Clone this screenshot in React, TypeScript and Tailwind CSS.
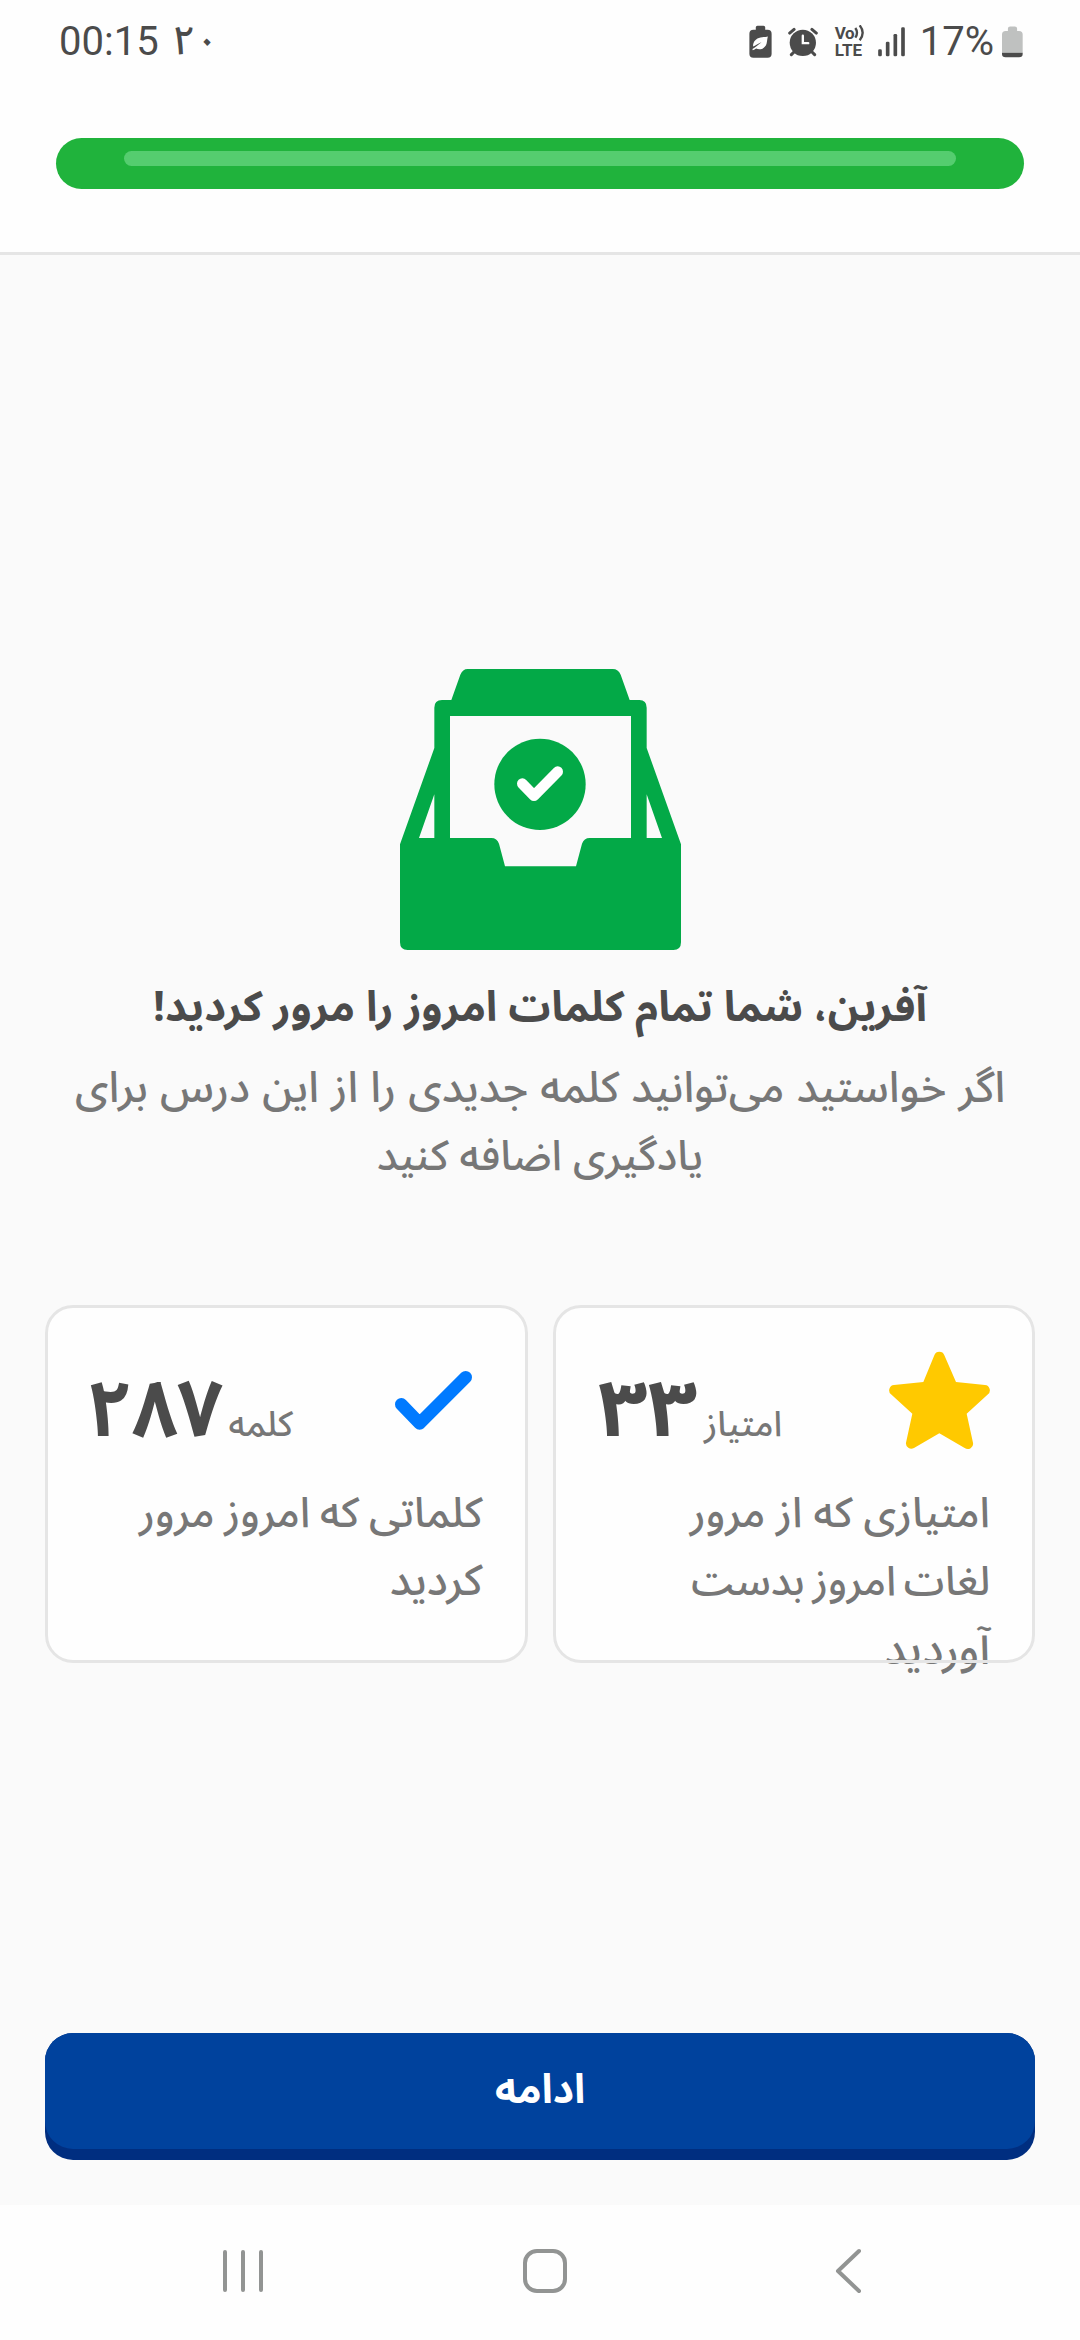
import type { ReactNode } from "react";

type Stat = {
	id: string;
	value: string;
	valueClass: string;
	unit: string;
	lines: { text: string; className: string }[];
	icon: ReactNode;
};

function StarIcon() {
	return (
		<svg viewBox="1047 180 303 303" className="size-[101px] shrink-0" fill="#ffc900">
			<path d="M1183 196A16 16 0 0 1 1213 196L1248 276L1335 285A16 16 0 0 1 1344 313L1280 371L1299 458A16 16 0 0 1 1274 474L1198 430L1122 474A16 16 0 0 1 1098 458L1117 371L1053 313A16 16 0 0 1 1062 285L1150 276Z" />
		</svg>
	);
}

function CheckIcon() {
	return (
		<svg viewBox="1053 180 303 303" className="size-[101px] shrink-0" fill="none">
			<path
				d="M1111 343L1166 400L1304 262"
				stroke="#007aff"
				strokeWidth="38"
				strokeLinecap="round"
				strokeLinejoin="round"
			/>
		</svg>
	);
}

function TrayIcon() {
	return (
		<svg viewBox="60 56 843 843" className="size-[281px] shrink-0">
			<path
				fill="#03a947"
				fillRule="evenodd"
				d="M263 56H698Q715 56 722 73L749 149H778Q800 149 800 172V293L903 582V876Q903 899 880 899H83Q60 899 60 876V582L163 293V172Q163 149 186 149H214L241 73Q248 56 263 56ZM210 197V563H334Q351 563 357 580L375 648H588L606 580Q612 563 629 563H753V197ZM163 432L117 563H163ZM800 432V563H846Z"
			/>
			<circle cx="480" cy="402" r="137" fill="#03a947" />
			<path
				d="M427 400L462 436L533 364"
				fill="none"
				stroke="#fff"
				strokeWidth="32"
				strokeLinecap="round"
				strokeLinejoin="round"
			/>
		</svg>
	);
}

const STATS: Stat[] = [
	{
		id: "words",
		value: "۲۸۷",
		valueClass: "-ml-[3px]",
		unit: "کلمه",
		lines: [
			{ text: "کلماتی که امروز مرور", className: "text-[42px] [word-spacing:-1px]" },
			{ text: "کردید", className: "text-[43px]" },
		],
		icon: <CheckIcon />,
	},
	{
		id: "points",
		value: "۳۳",
		valueClass: "mr-[10px] origin-left scale-x-110",
		unit: "امتیاز",
		lines: [
			{ text: "امتیازی که از مرور", className: "text-[42px]" },
			{ text: "لغات امروز بدست", className: "text-[41px] [word-spacing:-3px]" },
			{ text: "آوردید", className: "text-[44px]" },
		],
		icon: <StarIcon />,
	},
];

function StatusBar() {
	return (
		<div className="flex h-[83px] items-center justify-between pr-[57px] pl-[59px] font-['Roboto','Noto_Sans_Arabic',sans-serif] text-[40px] leading-none text-[#4b4b4b]">
			<div className="flex items-center gap-[14px]">
				<span>00:15</span>
				<span className="font-['Noto_Sans_Arabic'] leading-none font-medium tracking-[-2px]">۲۰</span>
			</div>
			<div className="flex items-center">
				<svg viewBox="140 76 68 98" className="h-[33px] w-[23px]" fill="#4b4b4b">
					<path d="M160 90V83Q160 78 165 78H183Q188 78 188 83V90H195Q207 90 207 102V162Q207 173 195 173H153Q141 173 141 162V102Q141 90 153 90Z" />
					<path
						fill="#fefefe"
						d="M196 110C192 112 181 111 174 113C160 116 151 126 152 140C158 137 168 130 177 127C168 134 160 141 150 147L151 151C155 150 158 148 161 146C174 152 188 145 192 132C194 124 194 115 196 110Z"
					/>
				</svg>
				<svg viewBox="257 82 89 89" className="ml-4 size-[30px]" fill="#4b4b4b">
					<circle cx="301" cy="129" r="39" />
					<path
						d="M262 100L275 89M341 100L328 89M267 164L277 154M336 164L326 154"
						stroke="#4b4b4b"
						strokeWidth="9"
						strokeLinecap="round"
					/>
					<path d="M301 108V130H317" fill="none" stroke="#fefefe" strokeWidth="7" strokeLinecap="round" />
				</svg>
				<div className="ml-[17px] flex w-[32px] flex-col text-[17px] leading-[17px] font-bold">
					<div className="flex items-center">
						<span className="tracking-[-0.5px]">Vo</span>
						<svg viewBox="460 80 30 48" className="h-4 w-[10px]" fill="none" stroke="#4b4b4b" strokeWidth="7">
							<path d="M464 89Q474 103 464 118M477 81Q495 103 477 126" />
						</svg>
					</div>
					<span>LTE</span>
				</div>
				<svg viewBox="528 80 80 90" className="ml-[11px] h-[30px] w-[27px]" fill="#4b4b4b">
					<rect x="528" y="147" width="11" height="21" rx="4" />
					<rect x="551" y="124" width="11" height="44" rx="4" />
					<rect x="574" y="101" width="11" height="67" rx="4" />
					<rect x="597" y="81" width="11" height="87" rx="4" />
				</svg>
				<span className="ml-[15px]">17%</span>
				<svg viewBox="900 76 64 95" className="ml-2 h-[32px] w-[21px]">
					<path
						fill="#bfc1c0"
						d="M918 90V82Q918 76 925 76H939Q946 76 946 82V90H952Q963 90 963 101V156H900V101Q900 90 911 90Z"
					/>
					<path fill="#4b4b4b" d="M900 156H963V160Q963 170 952 170H911Q900 170 900 160Z" />
				</svg>
			</div>
		</div>
	);
}

function StatCard({ stat }: { stat: Stat }) {
	return (
		<div className="relative h-[358px] flex-1 rounded-[28px] bg-[#fefefe] px-[45px] pt-[45px]">
			<div className="flex h-[101px] items-center justify-between">
				<div className="flex items-baseline gap-[6px] pt-[20px]">
					<span className={`text-[79px] leading-[101px] font-bold text-[#4b4b4b] ${stat.valueClass}`}>
						{stat.value}
					</span>
					<span className="text-[35px] font-medium">{stat.unit}</span>
				</div>
				{stat.icon}
			</div>
			<p dir="rtl" className="mt-[29px] leading-[68px] font-medium whitespace-nowrap">
				{stat.lines.map((line) => (
					<span key={line.text} className={`block ${line.className}`}>
						{line.text}
					</span>
				))}
			</p>
			{/* border sits above the text, which may run past the card */}
			<div className="pointer-events-none absolute inset-0 rounded-[28px] border-[3px] border-[#e5e5e5]" />
		</div>
	);
}

export default function App() {
	return (
		<div className="flex h-[2340px] w-[1080px] flex-col overflow-hidden bg-[#fafafa] font-['Noto_Sans_Arabic','DejaVu_Sans',sans-serif] text-[#777777]">
			<header className="h-[255px] border-b-[3px] border-[#e5e5e5] bg-[#fefefe]">
				<StatusBar />
				<div className="mx-[56px] mt-[55px] h-[51px] rounded-full bg-[#20b33c] px-[68px] pt-[13px]">
					<div className="h-[15px] rounded-full bg-[#55cd6f]" />
				</div>
			</header>

			<main className="flex flex-1 flex-col items-center pt-[414px]">
				<TrayIcon />
				<h1 dir="rtl" className="mt-[24px] text-[42px] leading-[68px] font-bold whitespace-nowrap text-[#4b4b4b]">
					آفرین، شما تمام کلمات امروز را مرور کردید!
				</h1>
				<p dir="rtl" className="mt-[13px] text-center text-[42px] leading-[68px] font-medium whitespace-nowrap">
					<span className="block text-[43px] [word-spacing:1px]">
						اگر خواستید می‌توانید کلمه جدیدی را از این درس برای
					</span>
					<span className="block">یادگیری اضافه کنید</span>
				</p>

				<div className="mt-[114px] flex w-full gap-[25px] px-[45px]">
					{STATS.map((stat) => (
						<StatCard key={stat.id} stat={stat} />
					))}
				</div>

				<div className="mt-auto mb-[45px] w-full px-[45px]">
					<button
						type="button"
						className="flex h-[127px] w-full flex-col rounded-[28px] bg-[#002e80] text-[41px] font-bold text-white"
					>
						<span className="flex h-[116px] w-full items-center justify-center rounded-[28px] bg-[#00429d]">ادامه</span>
					</button>
				</div>
			</main>

			<nav className="flex h-[135px] items-center bg-[#fefefe] pb-[3px] pl-[222px]">
				<svg viewBox="0 0 42 46" className="h-[46px] w-[42px]" stroke="#929493" strokeWidth="4" strokeLinecap="round">
					<path d="M3 4V42M21 4V42M39 4V42" />
				</svg>
				<svg viewBox="0 0 46 46" className="ml-[258px] size-[46px]" fill="none" stroke="#929493" strokeWidth="4">
					<rect x="3" y="3" width="40" height="40" rx="12" />
				</svg>
				<svg
					viewBox="0 0 28 46"
					className="ml-[267px] h-[46px] w-[28px]"
					fill="none"
					stroke="#929493"
					strokeWidth="4"
					strokeLinecap="round"
					strokeLinejoin="round"
				>
					<path d="M24 3L3 23L24 43" />
				</svg>
			</nav>
		</div>
	);
}
